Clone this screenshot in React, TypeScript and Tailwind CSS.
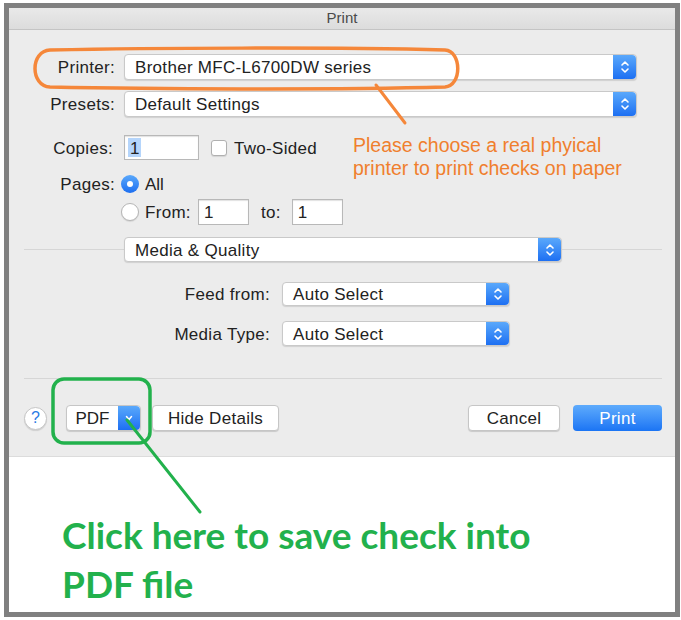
import React from "react";

const sans = { fontFamily: '"Liberation Sans", Arial, sans-serif' };

function Stepper() {
  return (
    <div className="w-[23px] self-stretch rounded-r-[4px] bg-gradient-to-b from-[#5aa8fb] to-[#1d6ff2] flex items-center justify-center">
      <svg width="10" height="16" viewBox="0 0 10 16" fill="none" stroke="white" strokeWidth="1.6" strokeLinecap="round" strokeLinejoin="round">
        <path d="M2 6 L5 3 L8 6" />
        <path d="M2 10 L5 13 L8 10" />
      </svg>
    </div>
  );
}

function Popup({ text, className }: { text: string; className: string }) {
  return (
    <div className={`flex bg-white rounded-[4px] border border-[#c9c9c9] shadow-[0_1px_1px_rgba(0,0,0,0.12)] ${className}`}>
      <div className="flex-1 flex items-center pl-[10px] pt-[2px] text-[17px] tracking-[0.3px] text-[#222]">{text}</div>
      <Stepper />
    </div>
  );
}

function Field({ value, className }: { value: string; className: string }) {
  return (
    <div className={`bg-white border border-[#b8b8b8] shadow-[inset_0_1px_1px_rgba(0,0,0,0.12)] flex items-center pl-[5px] pt-[2px] text-[17px] text-[#222] ${className}`}>
      {value}
    </div>
  );
}

function Radio({ on }: { on?: boolean }) {
  return on ? (
    <div className="w-[18px] h-[18px] rounded-full bg-gradient-to-b from-[#5aa8fb] to-[#1c6ef0] flex items-center justify-center">
      <div className="w-[6px] h-[6px] rounded-full bg-white" />
    </div>
  ) : (
    <div className="w-[18px] h-[18px] rounded-full bg-white border border-[#b5b5b5] shadow-[0_1px_1px_rgba(0,0,0,0.1)]" />
  );
}

function Button({ children, className }: { children: React.ReactNode; className: string }) {
  return (
    <div className={`h-[26px] pt-[2px] bg-white rounded-[4px] border border-[#c6c6c6] shadow-[0_1px_1px_rgba(0,0,0,0.15)] flex items-center justify-center text-[17px] tracking-[0.3px] text-[#222] ${className}`}>
      {children}
    </div>
  );
}

const label = "pt-[2px] text-right text-[17px] tracking-[0.3px] text-[#222]";

export default function App() {
  return (
    <div className="relative w-[681px] h-[620px] bg-white overflow-hidden" style={sans}>
      <div className="ml-[4px] mt-[3px] w-[676px] h-[614px] border-[5px] border-[#808080] flex flex-col">
        {/* Title bar */}
        <div className="h-[22px] shrink-0 bg-gradient-to-b from-[#e9e9e9] to-[#dcdcdc] border-b border-[#c4c4c4] flex items-center justify-center text-[15px] text-[#4a4a4a]">
          Print
        </div>

        {/* Dialog body */}
        <div className="bg-[#ececec] flex flex-col pb-[25px]">
          <div className="flex h-[26px] mt-[24px]">
            <div className={`w-[106px] self-center ${label}`}>Printer:</div>
            <Popup text="Brother MFC-L6700DW series" className="ml-[9px] w-[513px]" />
          </div>
          <div className="flex h-[26px] mt-[11px]">
            <div className={`w-[106px] self-center ${label}`}>Presets:</div>
            <Popup text="Default Settings" className="ml-[9px] w-[513px]" />
          </div>
          <div className="flex items-center h-[25px] mt-[18px]">
            <div className={`w-[104px] ${label}`}>Copies:</div>
            <div className="ml-[11px] w-[75px] h-[25px] bg-white border border-[#b8b8b8] shadow-[inset_0_1px_1px_rgba(0,0,0,0.12)] flex items-center pl-[3px]">
              <span className="bg-[#b5d5fb] px-[2px] pt-[2px] h-[19px] flex items-center text-[17px] text-[#222]">1</span>
            </div>
            <div className="ml-[12px] w-[16px] h-[16px] bg-white border border-[#b0b0b0] rounded-[3px] shadow-[0_1px_1px_rgba(0,0,0,0.1)]" />
            <span className="ml-[7px] pt-[2px] text-[17px] tracking-[0.3px] text-[#222]">Two-Sided</span>
          </div>
          <div className="flex items-center h-[18px] mt-[15px]">
            <div className={`w-[106px] ${label}`}>Pages:</div>
            <div className="ml-[6px]"><Radio on /></div>
            <span className="ml-[6px] pt-[2px] text-[17px] text-[#222]">All</span>
          </div>
          <div className="flex items-center h-[26px] mt-[6px] pl-[112px]">
            <Radio />
            <span className="ml-[6px] pt-[2px] text-[17px] tracking-[0.3px] text-[#222]">From:</span>
            <Field value="1" className="ml-[7px] w-[51px] h-[26px]" />
            <span className="ml-[12px] pt-[2px] text-[17px] tracking-[0.3px] text-[#222]">to:</span>
            <Field value="1" className="ml-[11px] w-[51px] h-[26px]" />
          </div>
          <div className="flex items-center h-[25px] mt-[12px]">
            <div className="ml-[15px] w-[100px] h-px bg-[#d6d6d6]" />
            <Popup text="Media & Quality" className="w-[438px] h-[25px]" />
            <div className="w-[100px] h-px bg-[#d6d6d6]" />
          </div>
          <div className="flex h-[24px] mt-[20px]">
            <div className={`w-[261px] self-center ${label}`}>Feed from:</div>
            <Popup text="Auto Select" className="ml-[12px] w-[228px]" />
          </div>
          <div className="flex h-[25px] mt-[15px]">
            <div className={`w-[261px] self-center ${label}`}>Media Type:</div>
            <Popup text="Auto Select" className="ml-[12px] w-[228px]" />
          </div>
          <div className="ml-[15px] w-[638px] h-px bg-[#d6d6d6] mt-[32px]" />
          <div className="flex items-center h-[26px] mt-[26px] pr-[13px]">
            <div className="ml-[15px] w-[23px] h-[23px] rounded-full bg-white border border-[#c6c6c6] shadow-[0_1px_1px_rgba(0,0,0,0.12)] flex items-center justify-center text-[16px] text-[#2a7ae4]">
              ?
            </div>
            <div className="ml-[19px] w-[75px] h-[26px] flex bg-white rounded-[4px] border border-[#c6c6c6] shadow-[0_1px_1px_rgba(0,0,0,0.15)]">
              <div className="flex-1 flex items-center justify-center pt-[2px] text-[17px] text-[#222]">PDF</div>
              <div className="w-[22px] rounded-r-[4px] bg-gradient-to-b from-[#5aa8fb] to-[#1d6ff2] flex items-center justify-center">
                <svg width="8" height="6" viewBox="0 0 8 6" fill="none" stroke="white" strokeWidth="1.5" strokeLinecap="round">
                  <path d="M1.5 1.5 L4 4.5 L6.5 1.5" />
                </svg>
              </div>
            </div>
            <Button className="ml-[11px] w-[127px]">Hide Details</Button>
            <div className="flex-1" />
            <Button className="w-[92px]">Cancel</Button>
            <div className="ml-[13px] w-[89px] h-[26px] pt-[2px] rounded-[4px] bg-gradient-to-b from-[#5eabfc] to-[#1a74f4] flex items-center justify-center text-[17px] tracking-[0.3px] text-white">
              Print
            </div>
          </div>
        </div>

        {/* Caption area */}
        <div className="flex-1 bg-white border-t border-[#dcdcdc] pt-[53px] pl-[53px]">
          <div
            className="text-[37px] leading-[49px] font-bold text-[#22b14c]"
            style={{ fontFamily: 'Lato, "Open Sans", sans-serif' }}
          >
            Click here to save check into
            <br />
            PDF file
          </div>
        </div>
      </div>

      {/* Orange annotation */}
      <div className="absolute left-[353px] top-[134px] text-[19.5px] leading-[23px] text-[#f07f2e]">
        Please choose a real phyical
        <br />
        printer to print checks on paper
      </div>

      {/* Drawn highlights */}
      <svg className="absolute left-0 top-0 pointer-events-none" width="681" height="620" viewBox="0 0 681 620" fill="none">
        <path
          d="M50 50 C 150 48, 330 47, 445 50 C 462 51, 462 86, 445 87 C 330 90, 150 89, 50 87 C 30 86, 30 51, 50 50 Z"
          stroke="#f5873a"
          strokeWidth="3.5"
        />
        <path d="M376 85 L405 123" stroke="#f5873a" strokeWidth="3" strokeLinecap="round" />
        <rect x="53" y="379" width="97" height="64" rx="11" stroke="#22b14c" strokeWidth="3.5" />
        <path d="M127 420 L200 512" stroke="#22b14c" strokeWidth="3" strokeLinecap="round" />
      </svg>
    </div>
  );
}
